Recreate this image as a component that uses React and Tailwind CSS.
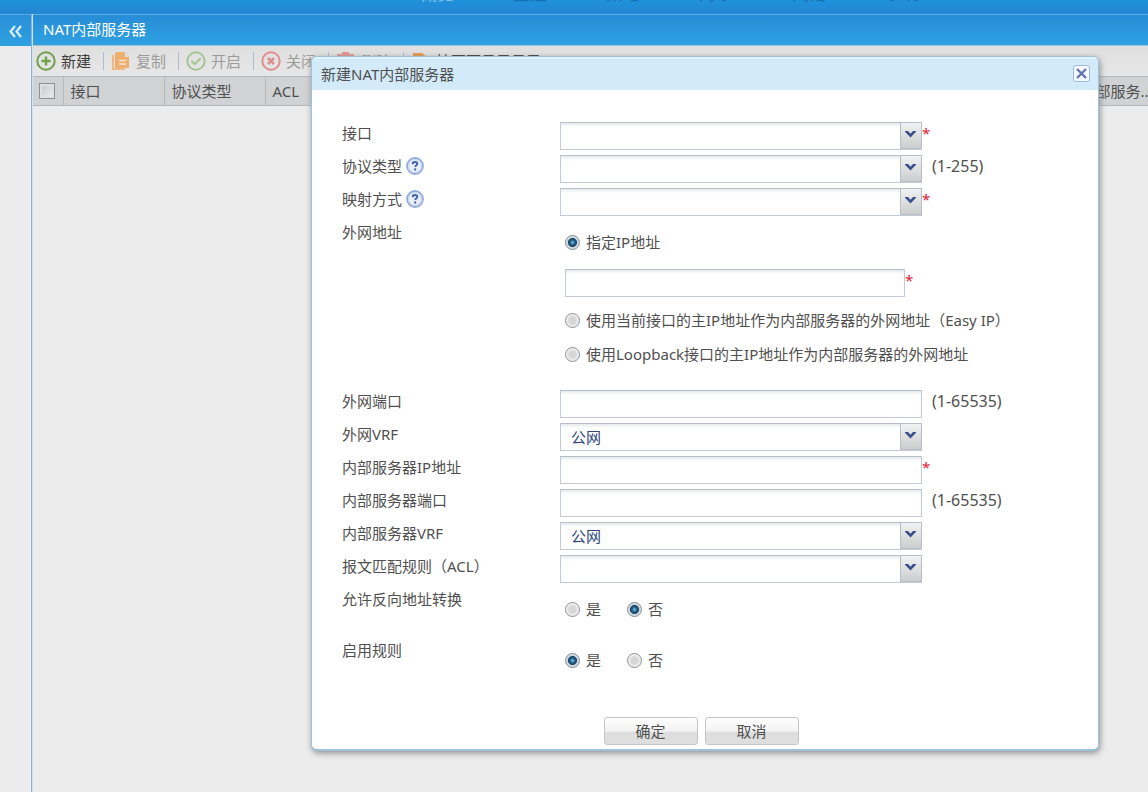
import { useState } from 'react';

const NAV = ['概览', '监控', '策略', '对象', '网络', '系统'];

const COLUMNS = ['接口', '协议类型', 'ACL', '映射方式', '外网地址', '外网端口', '外网VRF', '状态', '规则', '统计', '内部服务...'];

function PlusIcon() {
  return (
    <svg className="size-5" viewBox="0 0 20 20" fill="none" stroke="#6f9f49" strokeWidth="2">
      <circle cx="10" cy="10" r="8.7" />
      <path d="M10 5.5v9M5.5 10h9" strokeWidth="2.4" />
    </svg>
  );
}

function CopyIcon() {
  return (
    <svg className="size-5" viewBox="0 0 20 20">
      <path d="M1 4h2v13h11v2H1z" fill="#efb985" />
      <path d="M4 3q0-2 2-2h8l4 5v10q0 1-1 1H5q-1 0-1-1z" fill="#eeae6e" />
      <path d="M14 1v5h4" fill="#e3e0dd" />
      <path d="M8 9.500h7M8 13h7" stroke="#f5e4d2" strokeWidth="1.600" />
    </svg>
  );
}

function CheckIcon() {
  return (
    <svg className="size-5" viewBox="0 0 20 20" fill="none" stroke="#a5c496" strokeWidth="2">
      <circle cx="10" cy="10" r="8.700" />
      <path d="M5.500 10l3.200 3.200 6-6" />
    </svg>
  );
}

function CrossIcon() {
  return (
    <svg className="size-5" viewBox="0 0 20 20" fill="none" stroke="#dd8f90" strokeWidth="2">
      <circle cx="10" cy="10" r="8.700" />
      <path d="M7 7l6 6M13 7l-6 6" strokeWidth="2.600" />
    </svg>
  );
}

function TrashIcon() {
  return (
    <svg className="size-5" viewBox="0 0 20 20" fill="#e2958f">
      <path d="M6 1h7v2h5v3H1V3h5zM3 7h14v12H3z" />
    </svg>
  );
}

function PageIcon() {
  return (
    <svg className="size-5" viewBox="0 0 20 20" fill="#e39a4c">
      <path d="M2 2h9l6 5v11H2z" />
    </svg>
  );
}

const TOOLS = [
  { label: '新建', icon: <PlusIcon />, active: true },
  { label: '复制', icon: <CopyIcon /> },
  { label: '开启', icon: <CheckIcon /> },
  { label: '关闭', icon: <CrossIcon /> },
  { label: '删除', icon: <TrashIcon /> },
  { label: '按页面显示显示', icon: <PageIcon />, active: true },
];

function HelpIcon() {
  return (
    <svg className="size-[18px]" viewBox="0 0 18 18">
      <circle cx="9" cy="9" r="8" fill="#e9f0fa" stroke="#94addb" strokeWidth="1.800" />
      <circle cx="9" cy="9" r="6.400" fill="none" stroke="#c3d2ec" />
      <path d="M6.700 7.200c0-1.500 1-2.200 2.300-2.200s2.300.7 2.300 1.900c0 1.400-2 1.500-2 3.100" fill="none" stroke="#4361a6" strokeWidth="1.900" />
      <circle cx="9.200" cy="12.500" r="1.150" fill="#4361a6" />
    </svg>
  );
}

function Required() {
  return <span className="leading-[22px] text-[#e02035]">*</span>;
}

function Hint({ children }) {
  return <span className="pl-2.5 text-base leading-[22px]">{children}</span>;
}

const boxClass =
  'h-7 border border-[#c3cad8] border-t-[#b4bfca] bg-white text-[15px] text-[#2f477d] shadow-[inset_0_3px_3px_-1px_#e6eaed] outline-none';

function SelectBox({ id, options }) {
  return (
    <div className="relative w-[362px]">
      <select id={id} className={`${boxClass} block w-full appearance-none pl-2.5 pr-6`}>
        {options.map((o) => (
          <option key={o}>{o}</option>
        ))}
      </select>
      <span className="pointer-events-none absolute top-0 right-0 flex h-[27px] w-[22px] items-center justify-center border border-[#b9bec7] bg-linear-to-b from-[#f0f2f3] to-[#cbcdcf] pr-px pb-0.5">
        <svg className="h-[7px] w-[11px]" viewBox="0 0 11 7" fill="#3a4f88">
          <path d="M0 0h3l2.500 2.700L8 0h3v.8L5.500 6.600 0 .8z" />
        </svg>
      </span>
    </div>
  );
}

function Field({ id, label, help, options, required, hint }) {
  return (
    <div className="grid grid-cols-[218px_1fr]">
      <div className="flex h-[22px] items-center gap-1">
        <label htmlFor={id}>{label}</label>
        {help && <HelpIcon />}
      </div>
      <div className="flex items-start">
        {options ? (
          <SelectBox id={id} options={options} />
        ) : (
          <input id={id} type="text" className={`${boxClass} w-[362px] px-2.5`} />
        )}
        {required && <Required />}
        {hint && <Hint>{hint}</Hint>}
      </div>
    </div>
  );
}

function Radio({ name, value, current, onChange, children }) {
  return (
    <label className="flex h-[22px] items-center gap-1.5">
      <input
        type="radio"
        name={name}
        checked={current === value}
        onChange={() => onChange(value)}
        className="size-[15px] appearance-none rounded-full border border-[#8e9092] bg-radial from-[#d6d6d6] from-35% to-[#eeeeee] to-60% checked:border-[#7f8c97] checked:bg-[radial-gradient(circle_at_center,#8cc5e4_0,#2a6d9b_2px,#173f60_4px,#c9d3da_5px,#e3e6e8_7px)]"
      />
      <span>{children}</span>
    </label>
  );
}

function Dialog() {
  const [address, setAddress] = useState('ip');
  const [reverse, setReverse] = useState('no');
  const [enabled, setEnabled] = useState('yes');

  return (
    <section
      role="dialog"
      aria-labelledby="dialog-title"
      className="absolute top-[56px] right-[49px] left-[311px] overflow-hidden rounded-md border border-b-2 border-[#9dc3dc] bg-white shadow-[1px_2px_6px_#8c8c8c]"
    >
      <header className="flex h-[33px] items-center justify-between border-t-2 border-[#e3f4fe] bg-[#d3eafa] pr-2 pb-0.5 pl-[9px]">
        <h2 id="dialog-title">新建NAT内部服务器</h2>
        <button type="button" aria-label="关闭" className="flex size-[17px] items-center justify-center rounded-[3px] border border-[#9fb9df] bg-[#f5f9fe]">
          <svg className="size-[11px]" viewBox="0 0 11 11" stroke="#6375b3" strokeWidth="2.400">
            <path d="M1 1l9 9M10 1l-9 9" />
          </svg>
        </button>
      </header>

      <form className="flex flex-col gap-[5px] px-[30px] pt-8 pb-1" onSubmit={(e) => e.preventDefault()}>
        <Field id="iface" label="接口" options={['']} required />
        <Field id="protocol" label="协议类型" help options={['']} hint="(1-255)" />
        <Field id="mapping" label="映射方式" help options={['']} required />

        <fieldset className="grid grid-cols-[218px_1fr] pb-5">
          <legend className="float-left h-[22px] leading-[22px]">外网地址</legend>
          <div className="col-start-2 flex flex-col gap-3 pt-2.5 pl-[5px]">
            <Radio name="address" value="ip" current={address} onChange={setAddress}>指定IP地址</Radio>
            <div className="flex items-start pt-1">
              <input type="text" aria-label="指定IP地址" className={`${boxClass} w-[340px] px-2.5`} />
              <Required />
            </div>
            <Radio name="address" value="easy" current={address} onChange={setAddress}>
              使用当前接口的主IP地址作为内部服务器的外网地址（Easy IP）
            </Radio>
            <Radio name="address" value="loopback" current={address} onChange={setAddress}>
              使用Loopback接口的主IP地址作为内部服务器的外网地址
            </Radio>
          </div>
        </fieldset>

        <Field id="outer-port" label="外网端口" hint="(1-65535)" />
        <Field id="outer-vrf" label="外网VRF" options={['公网']} />
        <Field id="inner-ip" label="内部服务器IP地址" required />
        <Field id="inner-port" label="内部服务器端口" hint="(1-65535)" />
        <Field id="inner-vrf" label="内部服务器VRF" options={['公网']} />
        <Field id="acl" label="报文匹配规则（ACL）" options={['']} />

        <div role="radiogroup" aria-labelledby="reverse-label" className="grid grid-cols-[218px_1fr] pb-3.5">
          <span id="reverse-label" className="leading-[22px]">允许反向地址转换</span>
          <div className="flex gap-[26px] pt-2.5 pl-[5px]">
            <Radio name="reverse" value="yes" current={reverse} onChange={setReverse}>是</Radio>
            <Radio name="reverse" value="no" current={reverse} onChange={setReverse}>否</Radio>
          </div>
        </div>
        <div role="radiogroup" aria-labelledby="enabled-label" className="grid grid-cols-[218px_1fr]">
          <span id="enabled-label" className="leading-[22px]">启用规则</span>
          <div className="flex gap-[26px] pt-2.5 pl-[5px]">
            <Radio name="enabled" value="yes" current={enabled} onChange={setEnabled}>是</Radio>
            <Radio name="enabled" value="no" current={enabled} onChange={setEnabled}>否</Radio>
          </div>
        </div>

        <div className="flex justify-center gap-[7px] pt-[41px] pr-2">
          {['确定', '取消'].map((t) => (
            <button
              key={t}
              type="button"
              className="h-7 w-[94px] rounded-[3px] border border-[#c6c6c6] bg-linear-to-b from-[#fdfdfd] from-0% via-[#f3f3f3] via-50% to-[#dedede] to-55%"
            >
              {t}
            </button>
          ))}
        </div>
      </form>
    </section>
  );
}

export default function App() {
  return (
    <div className="relative flex min-h-screen flex-col overflow-hidden bg-[#ececec] font-['Noto_Sans','Noto_Sans_CJK_SC',sans-serif] text-[15px] leading-[22px] text-[#505050]">
      <nav className="flex h-3.5 items-end overflow-hidden bg-linear-to-b from-[#1e92dc] to-[#2485d2] pb-[9px] pl-[420px]">
        {NAV.map((t) => (
          <a key={t} href="#" className="w-[93px] shrink-0 text-[17px] leading-[22px] text-[#1672b2] first:text-[#7fbfe8]">
            {t}
          </a>
        ))}
      </nav>

      <div className="flex grow">
        <aside className="w-8 shrink-0 border-r border-[#8fb0d6]">
          <button type="button" aria-label="收起" className="flex h-8 w-full items-center justify-center border-t border-[#5bb0e8] bg-linear-to-b from-[#2a8fd8] to-[#2fa0e0] pt-0.5">
            <svg className="h-[13px] w-[13px]" viewBox="0 0 13 13" fill="none" stroke="#d7f0fc" strokeWidth="2.200">
              <path d="M6 1L1.500 6.500 6 12M12 1L7.500 6.500 12 12" />
            </svg>
          </button>
        </aside>

        <main className="min-w-0 grow overflow-hidden border-l border-[#cfe3f3]">
          <h1 className="h-8 border-t border-b border-t-[#5bb0e8] border-b-[#9cc7e3] bg-linear-to-b from-[#268cd6] to-[#2fa1e1] pl-2.5 leading-[28px] text-white">
            NAT内部服务器
          </h1>

          <div className="flex h-[30px] items-center overflow-hidden bg-linear-to-b from-[#dfdfdf] to-[#e7e7e7] pl-[3px]">
            {TOOLS.map((t, i) => (
              <div key={t.label} className="flex shrink-0 items-center">
                {i > 0 && <span className="mr-[7px] ml-3 h-[18px] w-px bg-[#a9bdd3]" />}
                <button
                  type="button"
                  className={t.active ? 'flex items-center gap-[5px] text-[#3c3c3c]' : 'flex items-center gap-[5px] text-[#9b9b9b]'}
                >
                  {t.icon}
                  {t.label}
                </button>
              </div>
            ))}
          </div>

          <table className="w-[1141px] table-fixed border-collapse bg-[#d0d2d4]">
            <thead>
              <tr className="h-[29px] border-t border-b border-[#b3b8be]">
                <th className="w-[30px] border-r border-[#b3b8be] p-0">
                  <input
                    type="checkbox"
                    aria-label="全选"
                    className="ml-1.5 block size-4 appearance-none border border-[#8e9092] bg-linear-to-br from-[#c3c5c8] to-[#f0f0f0] shadow-[inset_0_0_0_2px_#dfe0e1]"
                  />
                </th>
                {COLUMNS.map((c) => (
                  <th key={c} className="w-[101px] border-r border-[#b3b8be] pl-[7px] text-left font-normal whitespace-nowrap">
                    {c}
                  </th>
                ))}
              </tr>
            </thead>
          </table>
        </main>
      </div>

      <Dialog />
    </div>
  );
}
